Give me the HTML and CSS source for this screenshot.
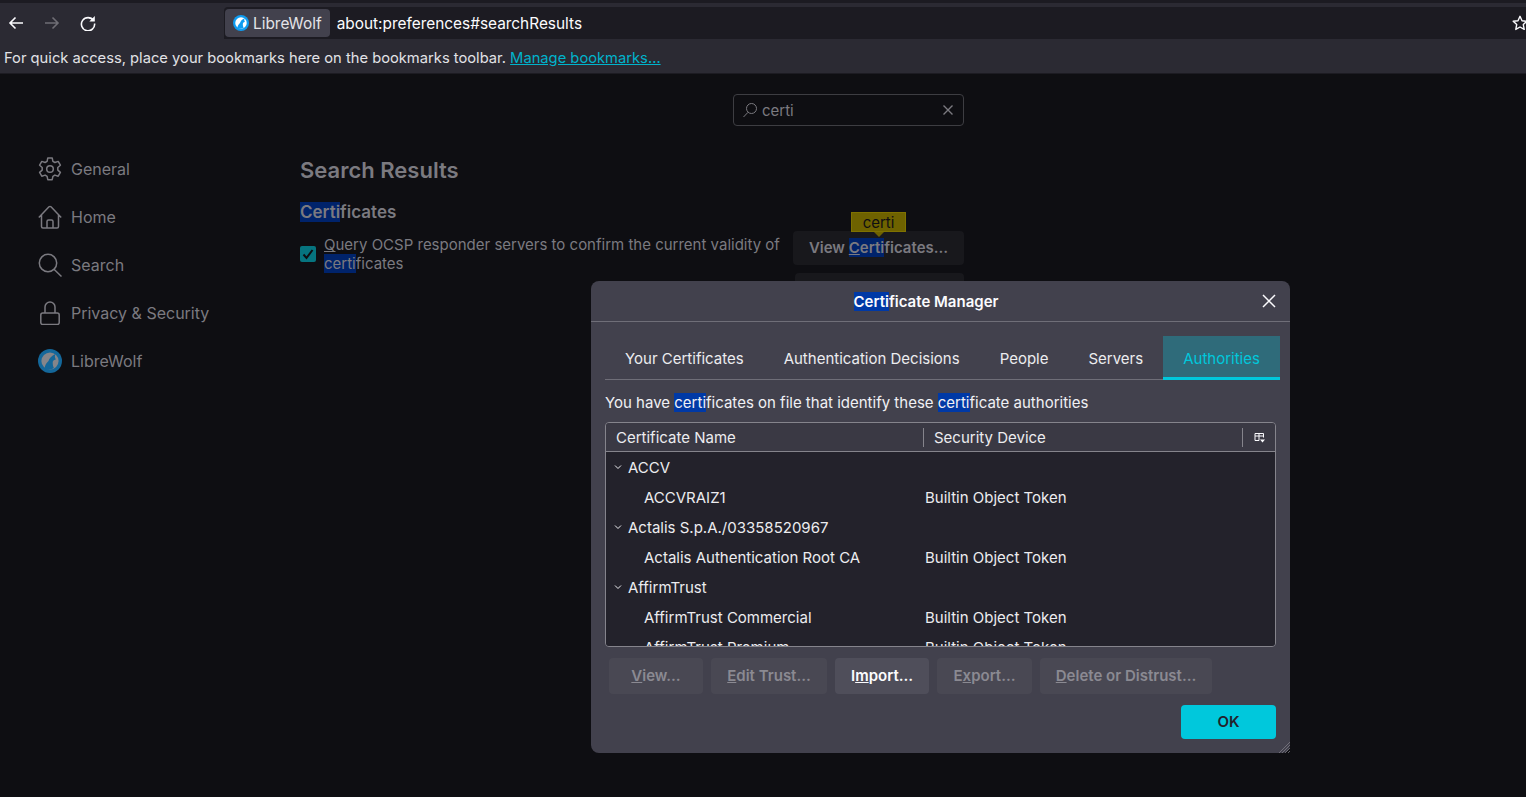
FILE: index.html
```html
<!DOCTYPE html>
<html lang="en">
<head>
  <meta charset="UTF-8" />
  <title>Search Results - Preferences</title>
  <link rel="stylesheet" href="styles.css">
</head>
<body>
  <svg class="defs" width="0" height="0">
    <symbol id="wolf" viewBox="0 0 24 24">
      <circle cx="12" cy="12" r="12" fill="currentColor"/>
      <circle cx="12" cy="12" r="8.6" fill="var(--logo-inner)"/>
      <path d="M6.5 19.5c.6-3.4 2-5.6 4-7.4.7-2.600 3-5.500 7-7.100-.6 1.500-.8 2.500-.5 3.400l.8 2-1.600.6c-1 .4-1.500 1.300-1.500 2.600 0 2.200.4 4 1.200 5.500-3.200 2-6.900 2.200-9.400.4z" fill="currentColor"/>
    </symbol>
  </svg>

  <header class="chrome">
    <div class="tabstrip"></div>
    <div class="navbar">
      <div class="navbuttons">
        <button class="navbtn">
          <svg width="16" height="16" viewBox="0 0 16 16"><path d="M15 8H2M7.500 2.500 2 8l5.500 5.500"/></svg>
        </button>
        <button class="navbtn off">
          <svg width="16" height="16" viewBox="0 0 16 16"><path d="M1 8h13M8.500 2.500 14 8l-5.500 5.500"/></svg>
        </button>
        <button class="navbtn">
          <svg width="16" height="16" viewBox="0 0 16 16"><path d="M13.500 5.500A6.600 6.600 0 1 0 14.600 8.500"/><path class="solid" d="M14.800 1v5.500H9.300z"/></svg>
        </button>
      </div>
      <div class="urlbar">
        <div class="identity">
          <svg class="logo bright" width="16" height="16"><use href="#wolf"/></svg>
          <span>LibreWolf</span>
        </div>
        <span class="url">about:preferences#searchResults</span>
        <svg class="star" width="16" height="16" viewBox="0 0 16 16"><path d="M8 1.300l2 4.400 4.800.6-3.500 3.300.9 4.800L8 12l-4.200 2.400.9-4.800L1.200 6.300 6 5.700z"/></svg>
      </div>
    </div>
    <div class="bookmarks">
      For quick access, place your bookmarks here on the bookmarks toolbar. <a href="#">Manage bookmarks…</a>
    </div>
  </header>

  <main class="page">
    <nav class="sidebar">
      <div class="cat">
        <svg width="24" height="24" viewBox="0 0 24 24"><path d="M9.800.9h4.400l.7 3.400 2 1.200 3.300-1.100 2.200 3.800-2.600 2.300v2.600l2.600 2.300-2.200 3.800-3.300-1.100-2 1.200-.7 3.400H9.800l-.7-3.400-2-1.200-3.300 1.100-2.200-3.800 2.600-2.300v-2.600L1.600 8.200l2.200-3.800 3.300 1.100 2-1.200z" stroke-linejoin="round"/><circle cx="12" cy="12" r="3.300"/></svg>
        General
      </div>
      <div class="cat">
        <svg width="24" height="24" viewBox="0 0 24 24"><path d="M.8 12.500 11 1.800a1.400 1.400 0 0 1 2 0l10.200 10.700M3.500 9.800V21.500A1.500 1.500 0 0 0 5 23h14a1.500 1.500 0 0 0 1.500-1.500V9.800M9 23v-6.500A1.500 1.500 0 0 1 10.500 15h3a1.500 1.500 0 0 1 1.500 1.500V23" stroke-linejoin="round"/></svg>
        Home
      </div>
      <div class="cat">
        <svg width="24" height="24" viewBox="0 0 24 24"><circle cx="10" cy="10" r="8.700"/><path d="M16 16.300l7.500 7.200"/></svg>
        Search
      </div>
      <div class="cat">
        <svg width="24" height="24" viewBox="0 0 24 24"><rect x="2.800" y="12" width="18.400" height="11.500" rx="2"/><path d="M7 12V6a5 5 0 0 1 10 0v6"/></svg>
        Privacy &amp; Security
      </div>
      <div class="cat">
        <svg class="logo dim" width="24" height="24"><use href="#wolf"/></svg>
        LibreWolf
      </div>
    </nav>

    <section class="content">
      <div class="searchrow">
        <div class="searchbox">
          <svg width="16" height="16" viewBox="0 0 16 16"><circle cx="9.500" cy="6.500" r="5"/><path d="M6 10.300 1.500 15"/></svg>
          <span class="searchtext">certi</span>
          <svg class="clear" width="12" height="12" viewBox="0 0 12 12"><path d="M1.500 1.500l9 9M10.500 1.500l-9 9"/></svg>
        </div>
      </div>
      <h1>Search Results</h1>
      <h2><mark>Certi</mark>ficates</h2>
      <div class="ocsp">
        <span class="checkbox">
          <svg width="12" height="12" viewBox="0 0 12 12"><path d="M1.500 6.500 4.500 10l6-8"/></svg>
        </span>
        <p><u>Q</u>uery OCSP responder servers to confirm the current validity of <mark>certi</mark>ficates</p>
        <div class="ocspbtns">
          <button class="pagebtn">View <mark><u>C</u>erti</mark>ficates…
            <span class="hint">certi</span>
          </button>
          <button class="pagebtn second"></button>
        </div>
      </div>
    </section>
  </main>

  <div class="dialog">
    <div class="titlebar">
      <span><mark>Certi</mark>ficate Manager</span>
      <svg class="close" width="14" height="14" viewBox="0 0 14 14"><path d="M1 1l12 12M13 1 1 13"/></svg>
    </div>
    <div class="dialogbody">
      <div class="tabs">
        <div class="tab">Your Certificates</div>
        <div class="tab">Authentication Decisions</div>
        <div class="tab">People</div>
        <div class="tab">Servers</div>
        <div class="tab active">Authorities</div>
      </div>
      <p class="desc">You have <mark>certi</mark>ficates on file that identify these <mark>certi</mark>ficate authorities</p>
      <div class="tree">
        <div class="treehead">
          <div class="col first">Certificate Name</div>
          <div class="col second">Security Device</div>
          <div class="col picker">
            <svg width="11" height="11" viewBox="0 0 11 11"><path d="M1 8.500V1.500h8.500v4M1 4h8.500M5 1.500v7H1"/><path class="solid" d="M6 7.500h5L8.500 10.500z"/></svg>
          </div>
        </div>
        <div class="treebody">
          <div class="row"><span class="name parent"><svg width="8" height="8" viewBox="0 0 8 8"><path d="M1 2.500 4 5.500l3-3"/></svg>ACCV</span></div>
          <div class="row"><span class="name child">ACCVRAIZ1</span><span class="device">Builtin Object Token</span></div>
          <div class="row"><span class="name parent"><svg width="8" height="8" viewBox="0 0 8 8"><path d="M1 2.500 4 5.500l3-3"/></svg>Actalis S.p.A./03358520967</span></div>
          <div class="row"><span class="name child">Actalis Authentication Root CA</span><span class="device">Builtin Object Token</span></div>
          <div class="row"><span class="name parent"><svg width="8" height="8" viewBox="0 0 8 8"><path d="M1 2.500 4 5.500l3-3"/></svg>AffirmTrust</span></div>
          <div class="row"><span class="name child">AffirmTrust Commercial</span><span class="device">Builtin Object Token</span></div>
          <div class="row"><span class="name child">AffirmTrust Premium</span><span class="device">Builtin Object Token</span></div>
        </div>
      </div>
      <div class="actions">
        <button class="btn w-view" disabled><u>V</u>iew…</button>
        <button class="btn w-edit" disabled><u>E</u>dit Trust…</button>
        <button class="btn w-import">I<u>m</u>port…</button>
        <button class="btn w-export" disabled>E<u>x</u>port…</button>
        <button class="btn w-delete" disabled><u>D</u>elete or Distrust…</button>
      </div>
      <div class="footer">
        <button class="okbtn">OK</button>
      </div>
    </div>
    <svg class="grip" width="12" height="12" viewBox="0 0 12 12"><path d="M12 1 1 12M12 4 4 12M12 7l-5 5M12 10l-2 2"/></svg>
  </div>
</body>
</html>
```

FILE: styles.css
```css
:root {
  --logo-inner: #fff;
}
* {
  box-sizing: border-box;
}
html, body {
  height: 100%;
}
body {
  margin: 0;
  overflow: hidden;
  background: #0e0e12;
  font-family: Inter, "Liberation Sans", sans-serif;
  font-size: 15px;
  color: #7b7a80;
}
button {
  font-family: inherit;
}
p, h1, h2 {
  margin: 0;
}
svg {
  fill: none;
  stroke: currentColor;
  flex: none;
}
.defs {
  position: absolute;
}
.solid {
  fill: currentColor;
  stroke: none;
}

/* browser chrome */
.tabstrip {
  height: 3px;
  background: #1c1b22;
}
.navbar {
  display: flex;
  height: 36px;
  padding-top: 4px;
  background: #2b2a33;
}
.navbuttons {
  display: flex;
  gap: 4px;
  width: 224px;
}
.navbtn {
  display: flex;
  align-items: center;
  justify-content: center;
  width: 32px;
  height: 32px;
  padding: 0;
  border: none;
  background: none;
  color: #fbfbfe;
}
.navbtn svg {
  stroke-width: 1.600;
}
.navbtn.off {
  color: #6f6e75;
}
.urlbar {
  display: flex;
  flex: 1;
  align-items: center;
  padding-left: 1px;
  background: #1c1b22;
  border-radius: 4px 0 0 0;
  color: #fbfbfe;
  font-size: 15.400px;
}
.identity {
  display: flex;
  align-items: center;
  gap: 4px;
  height: 28px;
  padding: 0 8px;
  border-radius: 4px;
  background: #42414d;
  color: #e4e4e8;
}
.logo.bright {
  color: #0f9cf0;
}
.logo.dim {
  color: #14679a;
  --logo-inner: #85858a;
}
.logo use {
  stroke: none;
}
.url {
  flex: 1;
  margin-left: 7px;
}
.star {
  margin-right: -2px;
  stroke-width: 1.400;
  stroke-linejoin: round;
}
.bookmarks {
  height: 35px;
  padding: 0 4px;
  background: #2b2a33;
  border-bottom: 1px solid #1c1b22;
  color: #e2e2e6;
  font-size: 14.730px;
  line-height: 38px;
  white-space: nowrap;
}
.bookmarks a {
  color: #00b3cc;
}

/* dimmed preferences page */
.page {
  display: flex;
}
.sidebar {
  width: 300px;
  padding: 71px 0 0 38px;
}
.cat {
  display: flex;
  align-items: center;
  gap: 9px;
  height: 48px;
  font-size: 16px;
}
.cat svg {
  stroke-width: 1.500;
}
.content {
  width: 664px;
}
.searchrow {
  display: flex;
  justify-content: flex-end;
  padding-top: 20px;
}
.searchbox {
  display: flex;
  align-items: center;
  width: 231px;
  height: 32px;
  padding: 0 9px 0 8px;
  border: 1px solid #3d3d42;
  border-radius: 4px;
}
.searchtext {
  flex: 1;
  margin-left: 4px;
}
.clear {
  stroke-width: 1.400;
}
h1 {
  margin-top: 29px;
  font-size: 22px;
  font-weight: 600;
  line-height: 30px;
}
h2 {
  margin-top: 15px;
  font-size: 17px;
  font-weight: 600;
  line-height: 24px;
}
mark {
  background: #00236b;
  color: inherit;
}
.ocsp {
  display: flex;
  margin-top: 7px;
}
.checkbox {
  display: flex;
  align-items: center;
  justify-content: center;
  width: 16px;
  height: 16px;
  margin-top: 15px;
  border-radius: 2px;
  background: #06747f;
  color: #0e0e12;
}
.checkbox svg {
  stroke-width: 2;
}
.ocsp p {
  width: 469px;
  margin: 4px 0 0 8px;
  line-height: 19px;
}
.ocspbtns {
  display: flex;
  flex-direction: column;
  align-items: flex-end;
  gap: 8px;
}
.pagebtn {
  position: relative;
  width: 171px;
  height: 34px;
  padding: 0 0 2px;
  border: none;
  border-radius: 4px;
  background: #18181c;
  color: #7b7a80;
  font-size: 15px;
  font-weight: 600;
}
.pagebtn.second {
  width: 169px;
}
.hint {
  position: absolute;
  left: 58px;
  top: -19px;
  width: 55px;
  height: 20px;
  background: #6e6200;
  border: 1px solid #7f7200;
  color: #0e0e12;
  font-size: 15px;
  font-weight: 400;
  line-height: 19px;
  text-align: center;
}
.hint::after {
  content: "";
  position: absolute;
  left: 22px;
  top: 19px;
  border: 5px solid transparent;
  border-top-color: #6e6200;
  border-bottom-width: 0;
}

/* certificate manager */
.dialog {
  position: absolute;
  left: 591px;
  top: 281px;
  display: flex;
  flex-direction: column;
  width: 699px;
  height: 472px;
  border-radius: 8px;
  background: #42414d;
  color: #fbfbfe;
}
.dialog mark {
  background: #0039a6;
}
.titlebar {
  display: flex;
  align-items: center;
  justify-content: center;
  position: relative;
  height: 41px;
  padding-right: 29px;
  border-bottom: 1px solid #6f6e78;
  font-weight: 600;
}
.close {
  position: absolute;
  right: 14px;
  top: 13px;
  stroke-width: 1.500;
}
.dialogbody {
  display: flex;
  flex-direction: column;
  flex: 1;
  padding: 14px 14px 0;
}
.tabs {
  display: flex;
  width: 671px;
  height: 44px;
  border-bottom: 1px solid #6f6e78;
}
.tab {
  display: flex;
  flex: none;
  align-items: center;
  height: 43px;
  padding: 2px 20px 0;
  color: #ececef;
  white-space: nowrap;
}
.tab.active {
  width: 117px;
  height: 44px;
  padding-top: 4px;
  border-bottom: 3px solid #00c8dc;
  background: #2f6b7a;
  color: #00c8dc;
}
.desc {
  margin-top: 13px;
  line-height: 19px;
  color: #f0f0f4;
}
.tree {
  display: flex;
  flex-direction: column;
  width: 671px;
  height: 225px;
  margin-top: 10px;
  overflow: hidden;
  border: 1px solid #85848c;
  border-radius: 4px;
}
.treehead {
  display: flex;
  flex: none;
  height: 29px;
  border-bottom: 1px solid #85848c;
  background: #3a3944;
  color: #ececef;
  line-height: 29px;
}
.col {
  position: relative;
  padding-left: 10px;
}
.col.first {
  width: 318px;
}
.col.second {
  width: 319px;
}
.col + .col::before {
  content: "";
  position: absolute;
  left: -1px;
  top: 5px;
  bottom: 4px;
  width: 1px;
  background: #85848c;
}
.col.picker {
  display: flex;
  align-items: center;
  padding-left: 11px;
  color: #fbfbfe;
}
.picker svg {
  stroke-width: 1;
}
.treebody {
  flex: 1;
  overflow: hidden;
  background: #23222b;
}
.row {
  display: flex;
  flex: none;
  align-items: center;
  height: 30px;
  color: #ececef;
}
.name {
  display: flex;
  align-items: center;
  width: 319px;
}
.name.parent {
  padding-left: 8px;
  gap: 6px;
}
.name.child {
  padding-left: 38px;
}
.parent svg {
  stroke-width: 1;
}
.actions {
  display: flex;
  gap: 8px;
  margin-top: 11px;
  padding-left: 4px;
}
.btn {
  height: 36px;
  padding: 0 0 2px;
  border: none;
  border-radius: 4px;
  background: #4f4e5a;
  color: #fbfbfe;
  font-size: 15px;
  font-weight: 600;
}
.btn:disabled {
  background: #494853;
  color: #8b8a92;
}
.w-view, .w-import {
  width: 94px;
}
.w-edit {
  width: 116px;
}
.w-export {
  width: 95px;
}
.w-delete {
  width: 172px;
}
.footer {
  display: flex;
  justify-content: flex-end;
  width: 671px;
  margin-top: 11px;
}
.okbtn {
  width: 95px;
  height: 34px;
  padding: 0 0 2px;
  border: none;
  border-radius: 4px;
  background: #00c8dc;
  color: #23222b;
  font-size: 15px;
  font-weight: 600;
}
.grip {
  position: absolute;
  right: 0;
  bottom: 0;
  color: #85848c;
  stroke-width: 0.700;
}
```
